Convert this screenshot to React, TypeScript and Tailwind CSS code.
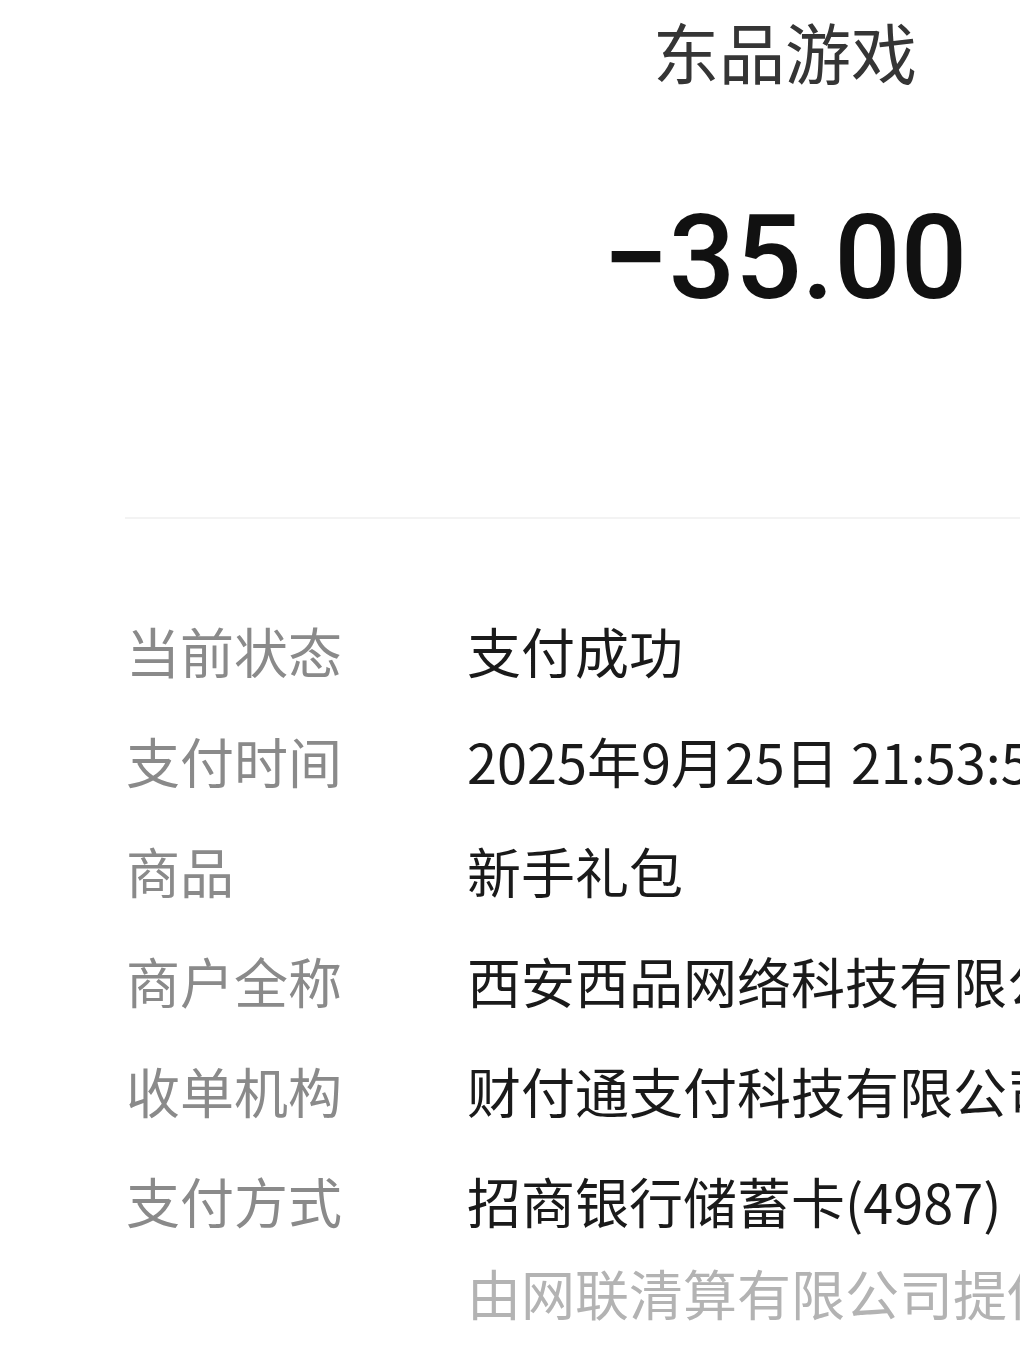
import React from 'react';

const ROWS: { label: string; value: string; note?: string }[] = [
  { label: '当前状态', value: '支付成功' },
  { label: '支付时间', value: '2025年9月25日 21:53:53' },
  { label: '商品', value: '新手礼包' },
  { label: '商户全称', value: '西安西品网络科技有限公司' },
  { label: '收单机构', value: '财付通支付科技有限公司' },
  { label: '支付方式', value: '招商银行储蓄卡(4987)', note: '由网联清算有限公司提供付款清算服务' },
];

const cjk = { fontFamily: '"Noto Sans CJK SC", "Noto Sans", sans-serif' };

export default function App() {
  return (
    <div className="w-[1020px] h-[1360px] overflow-hidden bg-white" style={cjk}>
      <div className="w-[1570px] pt-[10px]">
        {/* merchant + amount */}
        <div className="text-center text-[66px] leading-[80px] text-[#353535]">东品游戏</div>
        <div
          className="mt-[109px] text-center text-[117px] leading-[118px] font-medium text-[#111111]"
          style={{ fontFamily: 'Roboto, "Noto Sans", sans-serif' }}
        >
          −35.00
        </div>

        <div className="ml-[125px] mt-[200px] h-[2px] bg-[#f3f3f3]" />

        {/* detail rows */}
        <div className="pl-[126px] mt-[77px]">
          {ROWS.map((r) => (
            <div key={r.label} className="flex text-[54px]">
              <div className="w-[341px] shrink-0 leading-[110px] text-[#8a8a8a]">{r.label}</div>
              <div className="flex flex-col whitespace-nowrap">
                <span className="leading-[110px] text-[#1a1a1a]">{r.value}</span>
                {r.note && <span className="leading-[74px] text-[#b3b3b3]">{r.note}</span>}
              </div>
            </div>
          ))}
        </div>
      </div>
    </div>
  );
}
